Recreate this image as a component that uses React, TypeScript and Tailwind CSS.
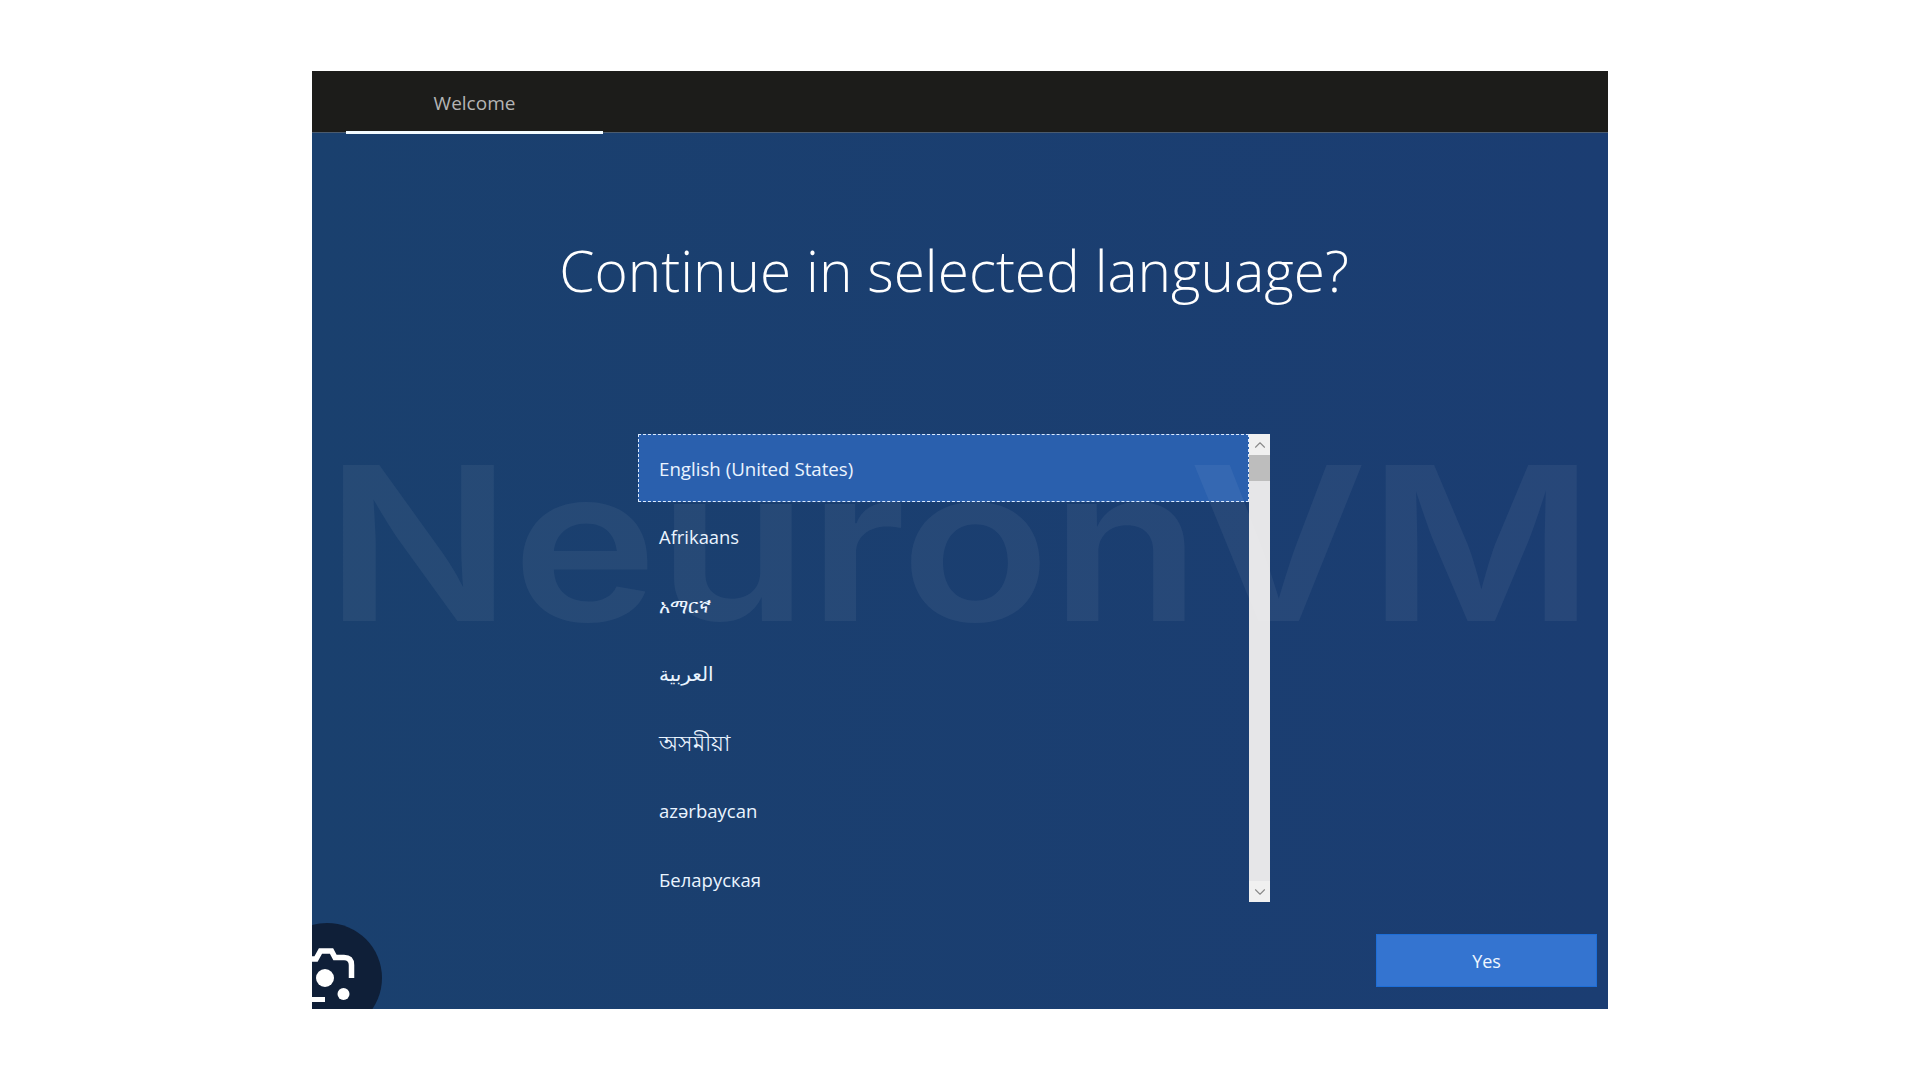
import { ChevronDown, ChevronUp } from "lucide-react";

const languages = [
  { label: "English (United States)", size: "text-[18.7px]", selected: true },
  { label: "Afrikaans", size: "text-[18.4px]" },
  { label: "አማርኛ", size: "text-[18.5px]" },
  { label: "العربية", size: "text-[20px]" },
  { label: "অসমীয়া", size: "text-[21.5px]" },
  { label: "azərbaycan", size: "text-[18.5px]" },
  { label: "Беларуская", size: "text-[18.5px]" },
];

function LensBadge() {
  return (
    <svg className="absolute left-0 bottom-0" width="72" height="88" viewBox="0 0 72 88" fill="none">
      <circle cx="15" cy="57" r="55" fill="#0f1f38" />
      <path
        d="M0 38 H4 L8.5 30 H19.5 L23 36.5 H32 Q39.5 36.5 39.5 44 V57"
        stroke="#fff"
        strokeWidth="5.5"
      />
      <circle cx="13" cy="57" r="9" fill="#fff" />
      <circle cx="31.5" cy="73" r="6" fill="#fff" />
      <rect x="0" y="76" width="13" height="5" fill="#fff" />
    </svg>
  );
}

export default function App() {
  return (
    <div className="min-h-screen bg-white pt-[71px] font-['Open_Sans','Noto_Sans','DejaVu_Sans',sans-serif]">
      <div className="relative mx-auto flex h-[938px] w-[1296px] flex-col overflow-hidden bg-gradient-to-r from-[#1a406e] to-[#1b3d72]">
        {/* header */}
        <div className="h-[62px] shrink-0 border-b border-[#4b5b6e] bg-[#1c1c1a]">
          <div className="relative ml-[34px] flex h-[63px] w-[257px] justify-center border-b-[3px] border-[#f2fbff] pt-[18px] text-[19px] leading-[28px] text-[#b4b4b4]">
            Welcome
          </div>
        </div>

        {/* watermark */}
        <div className="pointer-events-none absolute left-[13px] top-[322px] z-10 origin-left scale-x-[1.145] whitespace-nowrap text-[215px] font-semibold leading-[300px] text-white/[0.055] font-['Inter',sans-serif]">
          NeuronVM
        </div>

        <h1 className="mt-[99px] pr-[12px] text-center text-[56.8px] font-light leading-[76px] text-white">
          Continue in selected language?
        </h1>

        {/* language list */}
        <div className="ml-[326px] mt-[126px] flex h-[468px]">
          <ul className="w-[611px]">
            {languages.map((l) => (
              <li
                key={l.label}
                className={
                  l.selected
                    ? `flex h-[68px] items-center border border-dashed border-[#dcebff] bg-[#2a60ae] pl-[20px] pt-[2px] text-[#eaf4ff] ${l.size}`
                    : `flex h-[68.5px] items-center pl-[21px] pt-[2px] text-[#eaf4ff] ${l.size}`
                }
              >
                {l.label}
              </li>
            ))}
          </ul>
          <div className="flex w-[21px] flex-col bg-[#e6e6e8] text-[#8a8a8a]">
            <div className="flex h-[21px] items-center justify-center bg-[#f0f0f0]">
              <ChevronUp size={18} strokeWidth={1.5} />
            </div>
            <div className="h-[26px] bg-[#bdbdbd]" />
            <div className="flex-1" />
            <div className="flex h-[21px] items-center justify-center bg-[#f0f0f0]">
              <ChevronDown size={18} strokeWidth={1.5} />
            </div>
          </div>
        </div>

        {/* footer */}
        <div className="mt-[32px] flex justify-end pr-[11px]">
          <button className="flex h-[53px] w-[221px] items-center justify-center border border-[#1d6ed8] bg-[#3474d0] pt-[1px] text-[18px] text-[#f0f7ff]">
            Yes
          </button>
        </div>

        <LensBadge />
      </div>
    </div>
  );
}
